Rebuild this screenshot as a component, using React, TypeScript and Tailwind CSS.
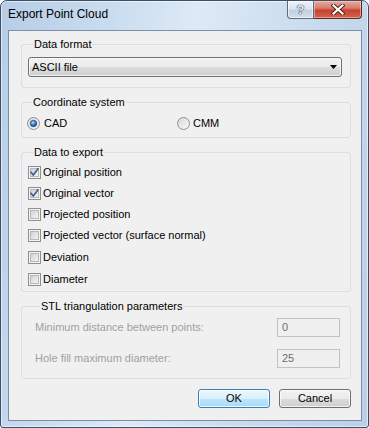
import React, { useId } from 'react';

const FONT = { fontFamily: '"Liberation Sans", Arial, sans-serif' };

const CheckBox = ({ checked }: { checked?: boolean }) => {
  const id = useId();
  return (
    <svg width="13" height="13" viewBox="0 0 13 13" className="shrink-0">
      <defs>
        <linearGradient id={id} x1="0" y1="0" x2="1" y2="1">
          <stop offset="0" stopColor="#cbcfd5" />
          <stop offset="1" stopColor="#f7f7f7" />
        </linearGradient>
      </defs>
      <rect x="0.5" y="0.5" width="12" height="12" fill="#f4f4f4" stroke="#8e8f8f" />
      <rect x="2.5" y="2.5" width="8" height="8" fill={`url(#${id})`} stroke="#b4b8bd" />
      {checked && (
        <path d="M3 6.2 L5.3 9 L10 2.8" fill="none" stroke="#4a5c8c" strokeWidth="1.7" strokeLinecap="round" strokeLinejoin="round" />
      )}
    </svg>
  );
};

const Radio = ({ checked }: { checked?: boolean }) => {
  const id = useId();
  return (
    <svg width="13" height="13" viewBox="0 0 13 13" className="shrink-0">
      <defs>
        <linearGradient id={`${id}a`} x1="0" y1="0" x2="1" y2="1">
          <stop offset="0" stopColor="#d4d6d9" />
          <stop offset="1" stopColor="#fbfbfb" />
        </linearGradient>
        <radialGradient id={`${id}b`} cx="0.4" cy="0.35" r="0.7">
          <stop offset="0" stopColor="#b8e3fb" />
          <stop offset="0.45" stopColor="#3f8fd2" />
          <stop offset="1" stopColor="#153e6b" />
        </radialGradient>
      </defs>
      <circle cx="6.5" cy="6.5" r="6" fill={`url(#${id}a)`} stroke="#8e8f8f" />
      {checked && <circle cx="6.5" cy="6.5" r="3.2" fill={`url(#${id}b)`} stroke="#24527e" strokeWidth="0.8" />}
    </svg>
  );
};

const GroupBox = ({ title, className, children }: { title: string; className?: string; children: React.ReactNode }) => (
  <div className={`rounded-[3px] border border-[#d5dfe5] ${className ?? ''}`}>
    <div className="-mt-[7px] flex h-[13px] items-center pl-[5px] leading-[13px]">
      <span className="bg-[#f0f0f0] px-[1px]">{title}</span>
    </div>
    {children}
  </div>
);

const DATA_ROWS = [
  { label: 'Original position', checked: true, mt: 'mt-[7px]' },
  { label: 'Original vector', checked: true, mt: 'mt-[8px]' },
  { label: 'Projected position', checked: false, mt: 'mt-[8px]' },
  { label: 'Projected vector (surface normal)', checked: false, mt: 'mt-[8px]' },
  { label: 'Deviation', checked: false, mt: 'mt-[9px]' },
  { label: 'Diameter', checked: false, mt: 'mt-[9px]' },
];

export default function App() {
  return (
    <div className="h-[428px] w-[369px] bg-white" style={FONT}>
      <div className="flex h-full w-full flex-col rounded-t-[7px] rounded-b-[3px] border border-[#3d4f66] bg-[linear-gradient(100deg,#b6cde6_0%,#c9dcef_25%,#dde9f6_45%,#cadcee_70%,#b9d0e8_100%)] shadow-[inset_0_0_0_1px_rgba(255,255,255,0.55)]">
        {/* title bar */}
        <div className="flex h-[29px] shrink-0 items-start">
          <div className="pl-[7px] pt-[6px] text-[12px] leading-[15px] text-black">Export Point Cloud</div>
          <div className="ml-auto mr-[6px] flex">
            <div className="flex h-[18px] w-[27px] items-center justify-center rounded-bl-[4px] border border-t-0 border-[#5b6b80] bg-[linear-gradient(to_bottom,#eef3f9_0%,#dbe4ef_45%,#c2cfde_55%,#d3dfeb_100%)] shadow-[inset_0_0_0_1px_rgba(255,255,255,0.6)]">
              <span className="text-[13px] font-bold leading-none text-[#e8edf3] [text-shadow:0_0_1px_#3d4b5c,0_0_1px_#3d4b5c,0_0_1px_#3d4b5c]">?</span>
            </div>
            <div className="flex h-[18px] w-[48px] items-center justify-center rounded-br-[4px] border border-l-0 border-t-0 border-[#5b2a24] bg-[linear-gradient(to_bottom,#e9a99c_0%,#d9806f_40%,#c7432f_55%,#d3644f_100%)] shadow-[inset_0_0_0_1px_rgba(255,220,210,0.5)]">
              <svg width="14" height="11" viewBox="0 0 14 11">
                <path d="M2.5 1.5 L11.5 9.5 M11.5 1.5 L2.5 9.5" stroke="#4a1f1a" strokeWidth="4" strokeLinecap="square" />
                <path d="M2.5 1.5 L11.5 9.5 M11.5 1.5 L2.5 9.5" stroke="#ffffff" strokeWidth="2.2" strokeLinecap="square" />
              </svg>
            </div>
          </div>
        </div>

        {/* client area */}
        <div className="ml-[7px] mr-[6px] flex flex-1 flex-col border border-[#7c8ea3] bg-[#f0f0f0] text-[11px] leading-[13px] text-black">
          <GroupBox title="Data format" className="ml-[12px] mr-[10px] mt-[13px] pb-[10px] pl-[6px] pr-[8px]">
            <div className="mt-[6px] flex h-[20px] items-center rounded-[3px] border border-[#707070] bg-[linear-gradient(to_bottom,#f2f2f2_0%,#ebebeb_50%,#dddddd_50%,#cfcfcf_100%)] pl-[3px] pr-[4px] shadow-[inset_0_0_0_1px_rgba(255,255,255,0.7)]">
              <span>ASCII file</span>
              <svg width="7" height="4" viewBox="0 0 7 4" className="ml-auto">
                <path d="M0 0 H7 L3.5 4 Z" fill="#000" />
              </svg>
            </div>
          </GroupBox>

          <GroupBox title="Coordinate system" className="ml-[12px] mr-[10px] mt-[14px] pb-[7px] pl-[5px]">
            <div className="mt-[8px] flex h-[13px] items-center">
              <div className="flex w-[150px] items-center gap-[4px]">
                <Radio checked />
                <span>CAD</span>
              </div>
              <div className="flex items-center gap-[3px]">
                <Radio />
                <span>CMM</span>
              </div>
            </div>
          </GroupBox>

          <GroupBox title="Data to export" className="ml-[12px] mr-[10px] mt-[14px] pb-[5px] pl-[6px]">
            {DATA_ROWS.map((row) => (
              <div key={row.label} className={`${row.mt} flex h-[13px] items-center gap-[2px]`}>
                <CheckBox checked={row.checked} />
                <span>{row.label}</span>
              </div>
            ))}
          </GroupBox>

          <GroupBox title="STL triangulation parameters" className="ml-[12px] mr-[10px] mt-[14px] pb-[10px] pl-[13px] pr-[10px]">
            <div className="mt-[5px] flex h-[19px] items-center">
              <span className="text-[#a0a0a0]">Minimum distance between points:</span>
              <div className="ml-auto flex h-[19px] w-[63px] items-center border border-[#c2c2c2] bg-[#f0f0f0] pl-[4px] text-[#6d6d6d]">0</div>
            </div>
            <div className="mt-[12px] flex h-[19px] items-center">
              <span className="text-[#a0a0a0]">Hole fill maximum diameter:</span>
              <div className="ml-auto flex h-[19px] w-[63px] items-center border border-[#c2c2c2] bg-[#f0f0f0] pl-[4px] text-[#6d6d6d]">25</div>
            </div>
          </GroupBox>

          <div className="mt-[10px] flex justify-end gap-[9px] pr-[10px]">
            <button className="flex h-[19px] w-[72px] items-center justify-center rounded-[3px] border border-[#3c7fb1] bg-[linear-gradient(to_bottom,#eaf6fd_0%,#d9f0fc_50%,#bee6fd_50%,#a7d9f5_100%)] shadow-[inset_0_0_0_1px_rgba(255,255,255,0.8)]">
              OK
            </button>
            <button className="flex h-[19px] w-[72px] items-center justify-center rounded-[3px] border border-[#707070] bg-[linear-gradient(to_bottom,#f2f2f2_0%,#ebebeb_50%,#dddddd_50%,#cfcfcf_100%)] shadow-[inset_0_0_0_1px_rgba(255,255,255,0.7)]">
              Cancel
            </button>
          </div>
        </div>
        <div className="h-[6px] shrink-0" />
      </div>
    </div>
  );
}
